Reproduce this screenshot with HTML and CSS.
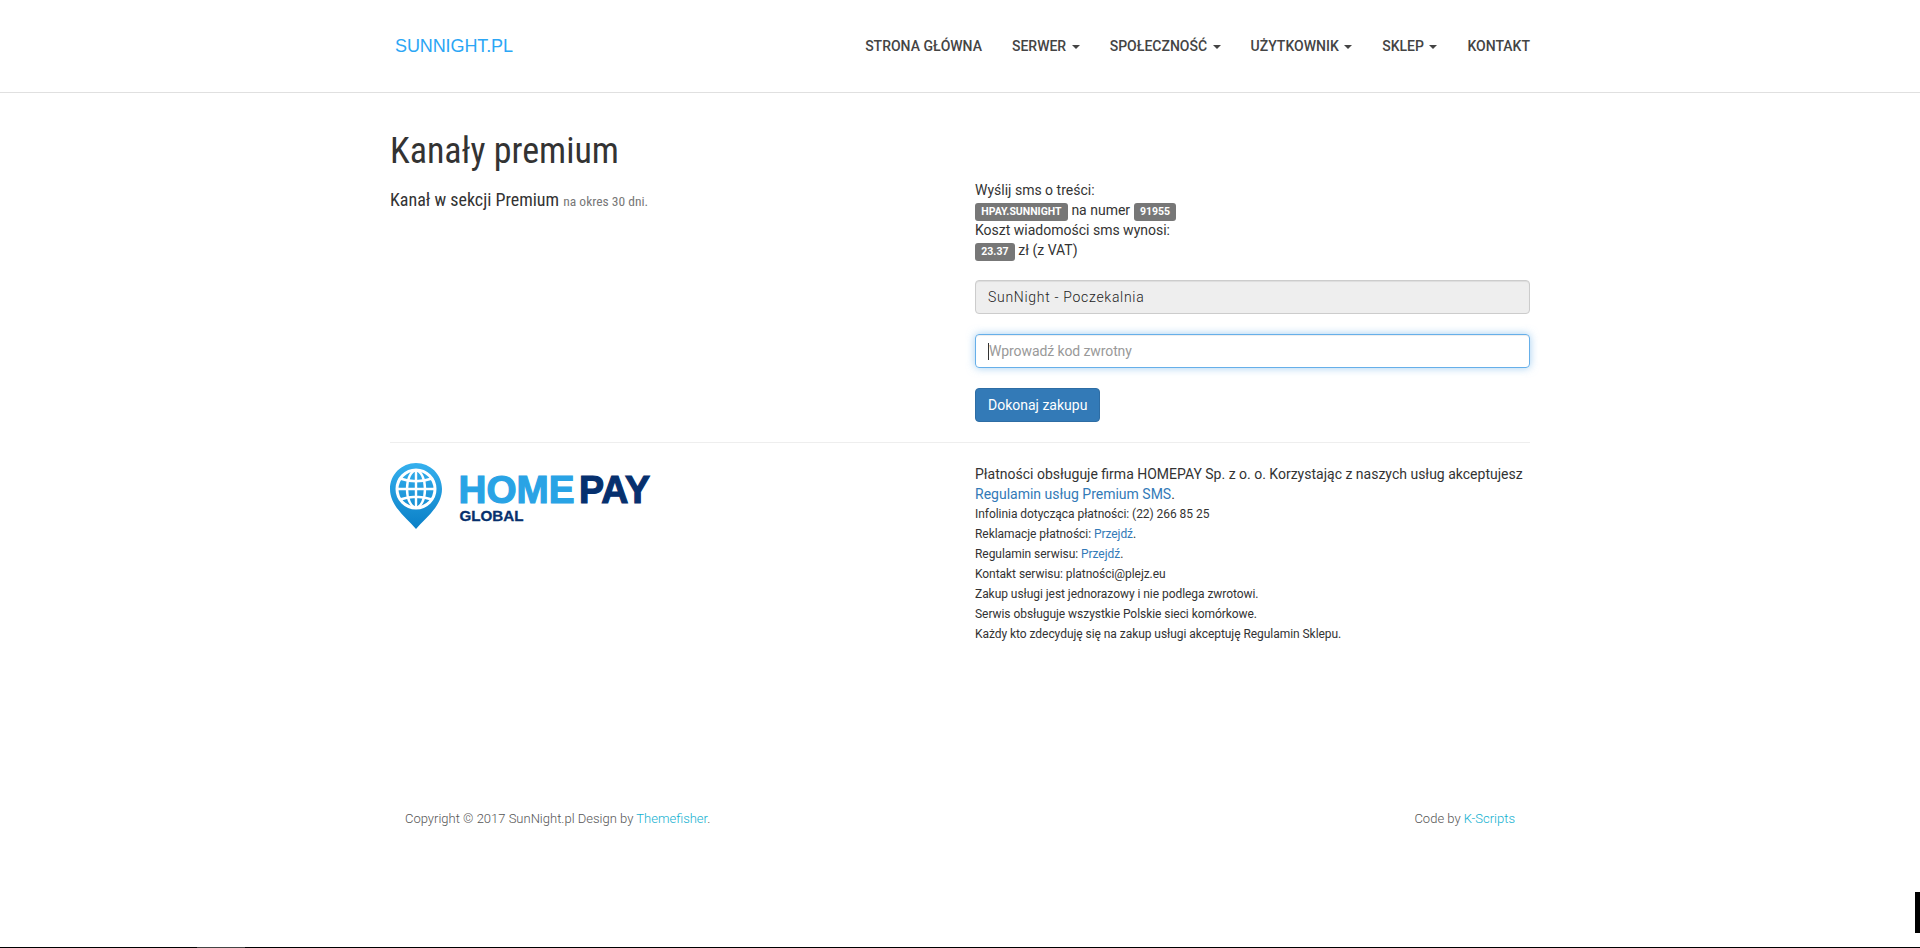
FILE: index.html
```html
<!DOCTYPE html>
<html lang="pl">
<head>
<meta charset="utf-8">
<title>Kanały premium</title>
<link rel="stylesheet" href="styles.css">
</head>
<body>
<header class="navbar">
  <div class="container nav-inner">
    <a class="brand">SUNNIGHT.PL</a>
    <nav class="nav-links">
      <a>STRONA GŁÓWNA</a>
      <a>SERWER <span class="caret"></span></a>
      <a>SPOŁECZNOŚĆ <span class="caret"></span></a>
      <a>UŻYTKOWNIK <span class="caret"></span></a>
      <a>SKLEP <span class="caret"></span></a>
      <a>KONTAKT</a>
    </nav>
  </div>
</header>
<main class="container main">
  <h1 class="title">Kanały premium</h1>
  <div class="row top-row">
    <div class="col">
      <h4 class="lead-line">Kanał w sekcji Premium <small>na okres 30 dni.</small></h4>
    </div>
    <div class="col">
      <p class="sms-info">Wyślij sms o treści:<br>
      <span class="label">HPAY.SUNNIGHT</span> na numer <span class="label">91955</span><br>
      Koszt wiadomości sms wynosi:<br>
      <span class="label">23.37</span> zł (z VAT)</p>
      <div class="field field-disabled">SunNight - Poczekalnia</div>
      <div class="field field-focus"><span class="cursor"></span><span class="placeholder">Wprowadź kod zwrotny</span></div>
      <button class="btn">Dokonaj zakupu</button>
    </div>
  </div>
  <hr class="divider">
  <div class="row">
    <div class="col">
      <svg class="logo" width="264" height="68" viewBox="0 0 264 68" role="img" aria-label="HomePay Global">
        <defs>
          <linearGradient id="pin" x1="0" y1="0" x2="0" y2="1">
            <stop offset="0" stop-color="#35b0ee"/>
            <stop offset="1" stop-color="#0a7fc6"/>
          </linearGradient>
        </defs>
        <path d="M26 0C11.600 0 0 11.600 0 26C0 43 16.500 55 26 66C35.500 55 52 43 52 26C52 11.600 40.400 0 26 0Z" fill="url(#pin)"/>
        <circle cx="26" cy="26" r="19" fill="none" stroke="#fff" stroke-width="3"/>
        <g fill="none" stroke="#fff" stroke-width="2.400">
          <ellipse cx="26" cy="26" rx="9" ry="18.500"/>
          <path d="M26 7V45M7 26H45M10 15.500C20 19 32 19 42 15.500M10 36.500C20 33 32 33 42 36.500"/>
        </g>
        <text x="68.500" y="40" class="logo-home" textLength="116" lengthAdjust="spacingAndGlyphs">HOME</text>
        <text x="189" y="40" class="logo-pay" textLength="71" lengthAdjust="spacingAndGlyphs">PAY</text>
        <text x="69.500" y="58" class="logo-global" textLength="64" lengthAdjust="spacingAndGlyphs">GLOBAL</text>
      </svg>
    </div>
    <div class="col">
      <p class="pay-text">Płatności obsługuje firma HOMEPAY Sp. z o. o. Korzystając z naszych usług akceptujesz <a class="link">Regulamin usług Premium SMS</a>.</p>
      <ul class="fine">
        <li>Infolinia dotycząca płatności: (22) 266 85 25</li>
        <li>Reklamacje płatności: <a class="link">Przejdź</a>.</li>
        <li>Regulamin serwisu: <a class="link">Przejdź</a>.</li>
        <li>Kontakt serwisu: platności@plejz.eu</li>
        <li>Zakup usługi jest jednorazowy i nie podlega zwrotowi.</li>
        <li>Serwis obsługuje wszystkie Polskie sieci komórkowe.</li>
        <li>Każdy kto zdecyduję się na zakup usługi akceptuję Regulamin Sklepu.</li>
      </ul>
    </div>
  </div>
</main>
<footer class="container footer">
  <span>Copyright © 2017 SunNight.pl Design by <a class="foot-link">Themefisher</a>.</span>
  <span>Code by <a class="foot-link">K-Scripts</a></span>
</footer>
<div class="edge-line"><span class="edge-thumb"></span></div>
<div class="edge-box"></div>
</body>
</html>
```
FILE: styles.css
```css
* { box-sizing: border-box; }
html, body { margin: 0; height: 948px; overflow: hidden; }
body {
  position: relative;
  background: #fff;
  color: #333;
  font-family: Roboto, "Liberation Sans", sans-serif;
  font-size: 14px;
  line-height: 20px;
}
.container { width: 1170px; margin: 0 auto; padding: 0 15px; }
.navbar { height: 93px; border-bottom: 1px solid #e0e0e0; }
.nav-inner { display: flex; justify-content: space-between; align-items: center; height: 92px; }
.brand { margin-left: 5px; font-family: "Liberation Sans", sans-serif; font-size: 18px; letter-spacing: -.1px; color: #2ba6f5; }
.nav-links { display: flex; gap: 30px; }
.nav-links a { font-size: 14px; font-weight: 500; color: #444; white-space: nowrap; }
.caret {
  display: inline-block;
  width: 0; height: 0;
  margin-left: 2px;
  vertical-align: middle;
  border-top: 4px solid #444;
  border-left: 4px solid transparent;
  border-right: 4px solid transparent;
}
.title {
  margin: 38px 0 0;
  font-size: 36px;
  line-height: 40px;
  font-weight: 400;
  font-stretch: 75%;
  color: #333;
}
.row { display: flex; gap: 30px; }
.col { flex: 0 0 555px; min-width: 0; }
.lead-line {
  margin: 19px 0 0;
  font-size: 18px;
  line-height: 20px;
  font-weight: 400;
  font-stretch: 75%;
}
.lead-line small { font-size: 13.500px; color: #777; }
.sms-info { margin: 9px 0 20px; }
.label {
  padding: 2px 6.300px 3px;
  border-radius: 3px;
  background: #777;
  color: #fff;
  font-size: 10.500px;
  line-height: 1;
  font-weight: 700;
}
.field {
  height: 34px;
  margin-bottom: 20px;
  padding: 6px 12px;
  border: 1px solid #ccc;
  border-radius: 4px;
  font-size: 14px;
  line-height: 20px;
  color: #555;
}
.field-disabled {
  background: #eee;
  box-shadow: inset 0 1px 1px rgba(0,0,0,.075);
  color: #222;
  font-weight: 300;
  letter-spacing: .7px;
}
.field-focus {
  display: flex;
  align-items: center;
  border-color: #66afe9;
  box-shadow: inset 0 1px 1px rgba(0,0,0,.075), 0 0 8px rgba(102,175,233,.6);
}
.cursor { width: 1px; height: 17px; background: #333; }
.placeholder { color: #999; letter-spacing: -.1px; }
.btn {
  display: block;
  height: 34px;
  padding: 6px 12px;
  border: 1px solid #2e6da4;
  border-radius: 4px;
  background: #337ab7;
  color: #fff;
  font-family: inherit;
  font-size: 14px;
  line-height: 20px;
}
.divider { margin: 20px 0; border: 0; border-top: 1px solid #eee; }
.logo { display: block; }
.logo-home, .logo-pay, .logo-global { font-family: "Liberation Sans", sans-serif; font-weight: 700; }
.logo-home { font-size: 39px; fill: #29a3e5; stroke: #29a3e5; stroke-width: 1.200px; }
.logo-pay { font-size: 39px; fill: #06306e; stroke: #06306e; stroke-width: 1.200px; }
.logo-global { font-size: 14px; fill: #06306e; stroke: #06306e; stroke-width: .3px; }
.pay-text { margin: 1px 0 0; }
.link { color: #337ab7; }
.fine { margin: 0; padding: 0; list-style: none; font-size: 12px; line-height: 20px; letter-spacing: -.05px; }
.footer {
  display: flex;
  justify-content: space-between;
  margin-top: 165px;
  padding: 0 30px;
  font-size: 13px;
  font-weight: 300;
  color: #555;
}
.foot-link { color: #12b0d0; }
.edge-line { position: absolute; left: 0; right: 0; bottom: 0; height: 1px; background: #000; }
.edge-thumb { position: absolute; left: 197px; width: 48px; height: 1px; background: #444; }
.edge-box { position: absolute; right: 0; top: 892px; width: 5px; height: 41px; background: #000; }
```
